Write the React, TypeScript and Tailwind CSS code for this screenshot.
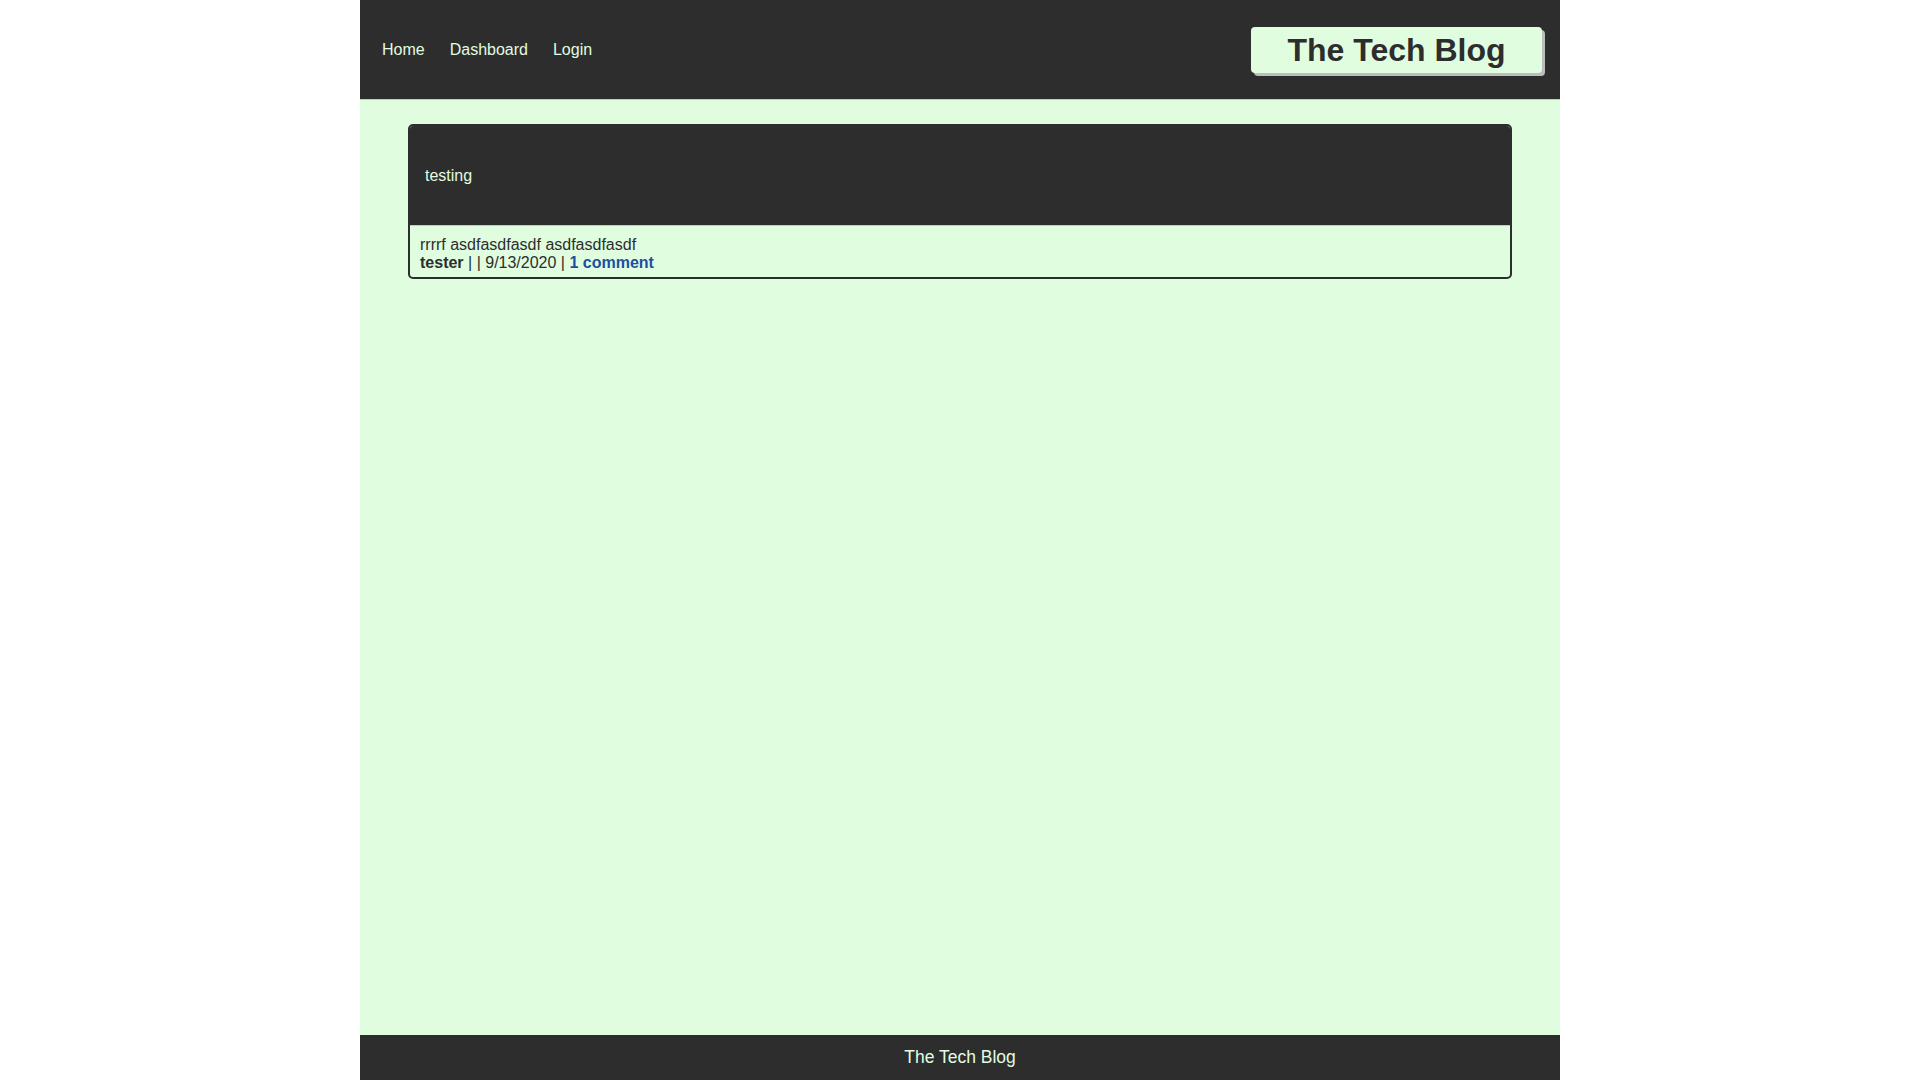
import React from 'react';

const App = () => {
  return (
    <div
      className="min-h-screen bg-white flex justify-center"
      style={{ fontFamily: '"Liberation Sans", Arial, Helvetica, sans-serif' }}
    >
      <div className="w-[1200px] min-h-screen flex flex-col bg-[#e0fde0]">
        {/* Header */}
        <header className="h-[100px] bg-[#2d2d2d] border-b border-[#c8c8c8] flex items-center justify-between pl-[22px] pr-[18px]">
          <nav className="flex items-center gap-[25px] text-[16px] text-[#e0fde0] mt-[1px]">
            <a href="#">Home</a>
            <a href="#">Dashboard</a>
            <a href="#">Login</a>
          </nav>
          <div className="h-[46px] w-[291px] mt-[1px] flex items-center justify-center rounded-[4px] bg-[#e0fde0] shadow-[3px_3px_0_#bdbdbd]">
            <span className="text-[32px] font-bold text-[#2d2d2d] leading-none">The Tech Blog</span>
          </div>
        </header>

        {/* Posts */}
        <main className="flex-1 px-[48px] pt-[24px]">
          <article className="rounded-[5px] border-2 border-[#2d2d2d] overflow-hidden">
            <div className="h-[100px] bg-[#2d2d2d] border-b border-[#c8c8c8] flex items-center px-[15px] text-[16px] text-[#e0fde0]">
              testing
            </div>
            <div className="px-[10px] pt-[10px] pb-[5px] text-[16px] leading-[18px] text-[#2d2d2d]">
              <p>rrrrf asdfasdfasdf asdfasdfasdf</p>
              <p>
                <span className="font-bold">tester</span> | | 9/13/2020 |{' '}
                <a href="#" className="font-bold text-[#1d4fa0]">1 comment</a>
              </p>
            </div>
          </article>
        </main>

        {/* Footer */}
        <footer className="h-[45px] bg-[#2d2d2d] flex items-center justify-center text-[17.5px] text-[#e0fde0]">
          The Tech Blog
        </footer>
      </div>
    </div>
  );
};

export default App;
